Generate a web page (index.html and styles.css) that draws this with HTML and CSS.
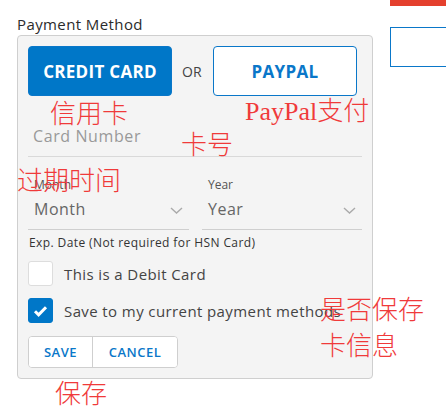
FILE: index.html
```html
<!DOCTYPE html>
<html>

<head>
    <title>Payment Method</title>
    <link rel="stylesheet" href="styles.css">
</head>

<body>
    <div class='page'>
        <section class='payment'>
            <h3 class='title'>Payment Method</h3>
            <div class='panel'>
                <div class='methods'>
                    <button class='method active'>CREDIT CARD</button>
                    <span class='or'>OR</span>
                    <button class='method'>PAYPAL</button>
                </div>
                <div class='card-number'>
                    <input type='text' placeholder='Card Number'>
                </div>
                <div class='expiry'>
                    <div class='select-field'>
                        <span class='small-label'>Month</span>
                        <div class='select'>
                            <span>Month</span>
                            <svg width="13" height="7" viewBox="0 0 13 7"><path d="M1 1l5.5 5 5.5-5" fill="none" stroke="#aaa" stroke-width="1.4"/></svg>
                        </div>
                    </div>
                    <div class='select-field'>
                        <span class='small-label'>Year</span>
                        <div class='select'>
                            <span>Year</span>
                            <svg width="13" height="7" viewBox="0 0 13 7"><path d="M1 1l5.5 5 5.5-5" fill="none" stroke="#aaa" stroke-width="1.4"/></svg>
                        </div>
                    </div>
                </div>
                <p class='hint'>Exp. Date (Not required for HSN Card)</p>
                <label class='check'>
                    <span class='box'></span>
                    This is a Debit Card
                </label>
                <label class='check'>
                    <span class='box checked'>
                        <svg width="15" height="12" viewBox="0 0 15 12"><path d="M2 6.2l3.6 3.6L13 2.2" fill="none" stroke="#fff" stroke-width="3"/></svg>
                    </span>
                    Save to my current payment methods
                </label>
                <div class='actions'>
                    <button>SAVE</button>
                    <button>CANCEL</button>
                </div>
            </div>
        </section>
        <aside class='side'>
            <div class='red-bar'></div>
            <div class='outline-box'></div>
        </aside>

        <span class='note note-card'>信用卡</span>
        <span class='note note-paypal'>PayPal支付</span>
        <span class='note note-number'>卡号</span>
        <span class='note note-expiry'>过期时间</span>
        <span class='note note-save-info'>是否保存<br>卡信息</span>
        <span class='note note-save'>保存</span>
    </div>
</body>

</html>
```

FILE: styles.css
```css
body {
    font-family: "Open Sans", Helvetica, Arial, sans-serif;
    margin: 0;
    background: #fff;
    color: #333;
}

button {
    border: 0;
    outline: none;
    font-family: inherit;
    cursor: pointer;
}

.page {
    position: relative;
    display: flex;
    padding-left: 17px;
    height: 406px;
    overflow: hidden;
}

.payment {
    width: 356px;
    flex: none;
}

.title {
    margin: 0;
    padding-top: 14px;
    font-size: 15px;
    line-height: 20px;
    font-weight: 400;
    letter-spacing: 0.4px;
    color: #2b2b2b;
}

.panel {
    margin-top: 1px;
    background-color: #f4f4f4;
    border: 1px solid #cfcfcf;
    border-radius: 4px;
    padding: 10px 10px 10px 10px;
}

.methods {
    display: flex;
    align-items: center;
    gap: 10px;
}

.method {
    width: 144px;
    height: 50px;
    border-radius: 4px;
    background-color: #fff;
    border: 1px solid #0a77c9;
    color: #0a77c9;
    font-size: 17px;
    font-weight: 700;
    letter-spacing: 0.3px;
}

.method.active {
    background-color: #0077c8;
    color: #fff;
}

.or {
    width: 21px;
    font-size: 14px;
    color: #444;
}

.card-number {
    padding: 30px 0 10px 0;
    border-bottom: 1px solid #d9d9d9;
}

.card-number input {
    display: block;
    width: 100%;
    box-sizing: border-box;
    border: 0;
    outline: none;
    background: transparent;
    padding: 0 0 0 5px;
    height: 20px;
    font-family: inherit;
    font-size: 16px;
    letter-spacing: 0.6px;
}

.card-number input::placeholder {
    color: #999;
}

.expiry {
    display: grid;
    grid-template-columns: 161px 160px;
    column-gap: 13px;
}

.select-field {
    padding: 21px 0 10px 0;
    border-bottom: 1px solid #cfcfcf;
}

.small-label {
    display: block;
    padding-left: 6px;
    font-size: 12px;
    line-height: 14px;
    color: #555;
}

.select {
    display: flex;
    align-items: center;
    justify-content: space-between;
    margin-top: 7px;
    padding: 0 6px 0 6px;
    height: 20px;
    font-size: 16px;
    letter-spacing: 0.5px;
    color: #666;
}

.select svg {
    display: block;
    margin-top: 2px;
}

.hint {
    margin: 6px 0 0 1px;
    font-size: 12px;
    line-height: 14px;
    letter-spacing: 0.4px;
    color: #333;
}

.check {
    display: flex;
    align-items: center;
    gap: 11px;
    margin-top: 11px;
    font-size: 15px;
    letter-spacing: 0.4px;
    color: #444;
}

.check + .check {
    margin-top: 12px;
}

.box {
    width: 23px;
    height: 23px;
    border: 1px solid #ddd;
    border-radius: 3px;
    background-color: #fff;
    display: flex;
    align-items: center;
    justify-content: center;
}

.box.checked {
    background-color: #0077c8;
    border-color: #0077c8;
}

.actions {
    display: inline-flex;
    margin-top: 13px;
    border: 1px solid #cfcfcf;
    border-radius: 4px;
    background-color: #fff;
    overflow: hidden;
}

.actions button {
    height: 30px;
    background-color: #fff;
    color: #0a77c9;
    font-size: 13px;
    font-weight: 600;
    letter-spacing: 0.5px;
    padding: 0;
}

.actions button:first-child {
    width: 64px;
    border-right: 1px solid #cfcfcf;
}

.actions button:last-child {
    width: 84px;
}

.side {
    margin-left: 17px;
    flex: 1;
}

.red-bar {
    height: 6px;
    background-color: #e4402d;
}

.outline-box {
    margin-top: 21px;
    height: 38px;
    border: 1px solid #0a77c9;
    border-right: 0;
}

/* red annotations drawn over the form */
.note {
    position: absolute;
    font-family: "Liberation Serif", "Noto Sans CJK SC", serif;
    font-size: 26px;
    line-height: 34px;
    color: #f03a3a;
    font-weight: 300;
}

.note-card {
    left: 50px;
    top: 98px;
}

.note-paypal {
    left: 245px;
    top: 95px;
}

.note-number {
    left: 181px;
    top: 129px;
}

.note-expiry {
    left: 17px;
    top: 165px;
}

.note-save-info {
    left: 320px;
    top: 293px;
    line-height: 36px;
}

.note-save {
    left: 55px;
    top: 378px;
}
```
